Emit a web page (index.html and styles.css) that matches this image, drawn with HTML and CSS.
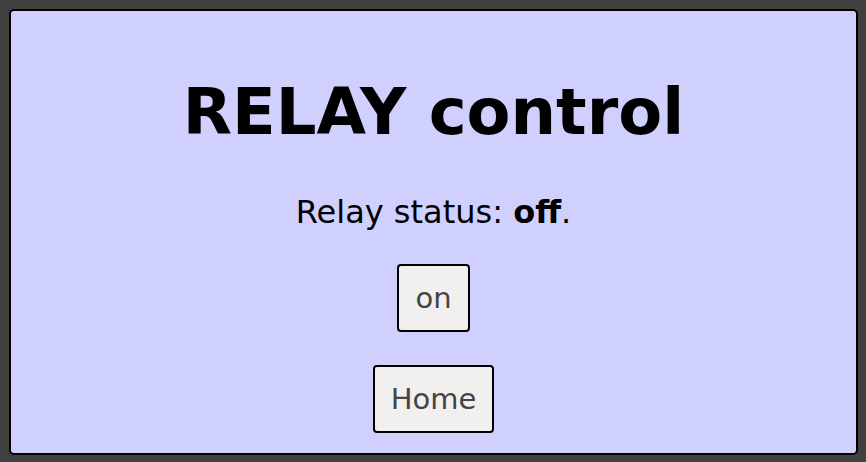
FILE: index.html
```html
<!DOCTYPE html>
<html lang="en">
<head>
  <meta charset="UTF-8" />
  <meta name="viewport" content="width=device-width, initial-scale=1.0"/>
  <title>RELAY control</title>
  <link rel="stylesheet" href="styles.css">
</head>
<body>
  <div class="panel">
    <h1>RELAY control</h1>
    <p class="status">Relay status: <strong>off</strong>.</p>
    <div class="controls">
      <button>on</button>
    </div>
    <div class="controls">
      <button>Home</button>
    </div>
  </div>
</body>
</html>
```

FILE: styles.css
```css
body {
  margin: 0;
  padding: 9px 8px 7px 9px;
  background-color: #404040;
  font-family: "DejaVu Sans", sans-serif;
  color: #000;
}

.panel {
  background-color: #d0d0ff;
  border: 2px solid #000;
  border-radius: 5px;
  text-align: center;
  padding: 0 0 20px;
}

h1 {
  font-size: 64px;
  margin: 0;
  padding: 64px 0 44px;
}

.status {
  font-size: 32px;
  margin: 0 0 33px;
}

.controls {
  margin-bottom: 33px;
}

.controls:last-child {
  margin-bottom: 0;
}

button {
  font-family: "DejaVu Sans", sans-serif;
  font-size: 29px;
  color: #444;
  background-color: #f2f0ee;
  border: 2px solid #000;
  border-radius: 4px;
  padding: 15px 16px;
}
```
